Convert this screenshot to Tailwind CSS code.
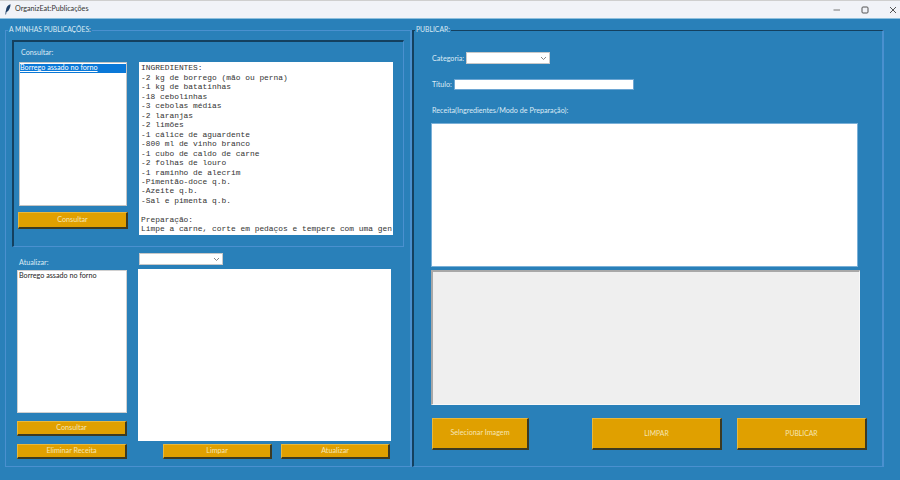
<!DOCTYPE html>
<html lang="pt">
<head>
<meta charset="utf-8">
<title>OrganizEat:Publicações</title>
<script src="https://cdn.jsdelivr.net/npm/@tailwindcss/browser@4"></script>
</head>
<body class="m-0 overflow-hidden">
<div class="w-[900px] h-[480px] flex flex-col bg-[#2980b9] font-['Lato','Open_Sans',sans-serif] text-[7.2px] text-[#dcebf5] overflow-hidden">
  <!-- title bar -->
  <header class="h-[19px] shrink-0 flex items-center bg-[#f1f3f8] border-t border-t-[#cfcfcf] border-b border-b-[#8fc0de] text-[#333] pl-[5px]">
    <svg class="w-[6px] h-[11px]" viewBox="0 0 6 11"><path d="M5.6 0.2C3 0.8 1.2 3 1 6.2L0.6 7.4 0.4 10.6 1 10.6 1.5 8C4 7 5.4 3.6 5.6 0.2Z" fill="#1f3f66"/></svg>
    <span class="ml-[4px] text-[7.2px] leading-none -mt-[1px]">OrganizEat:Publicações</span>
    <div class="ml-auto flex items-center h-full">
      <svg class="w-[8px] h-[8px]" viewBox="0 0 8 8"><path d="M0.5 4H7" stroke="#777" stroke-width="1" fill="none"/></svg>
      <svg class="ml-[20px] w-[8px] h-[8px]" viewBox="0 0 8 8"><rect x="1" y="1" width="6" height="6" rx="1" stroke="#555" stroke-width="1" fill="none"/></svg>
      <svg class="ml-[20px] mr-[3px] w-[8px] h-[8px]" viewBox="0 0 8 8"><path d="M1 1L7 7M7 1L1 7" stroke="#555" stroke-width="1" fill="none"/></svg>
    </div>
  </header>

  <main class="flex pt-[11px] pl-[5px]">
    <!-- A MINHAS PUBLICAÇÕES -->
    <section class="relative w-[407px] h-[437px] border border-r-2 border-[#4a90cf] border-r-[#4a90cf]">
      <span class="absolute left-[2px] -top-[7px] px-[1px] bg-[#2980b9] leading-[11px] text-[6.8px]">A MINHAS PUBLICAÇÕES:</span>

      <div class="ml-[6px] mt-[9px] w-[392px] h-[207px] border-l-2 border-t-2 border-r border-b border-l-[#14405f] border-t-[#14405f] border-r-[#4a90cf] border-b-[#4a90cf]">
        <div class="h-[20px] pl-[7px] pt-[5px] leading-[11px]">Consultar:</div>
        <div class="flex">
          <div class="ml-[4px] w-[110px] flex flex-col items-center">
            <div class="w-[108px] h-[144px] bg-white border border-[#c4c4c4] pt-[1px] text-[#1c1c1c]">
              <div class="h-[9px] bg-[#0a78d7] text-white underline leading-[8px]">Borrego assado no forno</div>
            </div>
            <button class="mt-[6px] w-[110px] h-[17px] bg-[#e0a000] border border-t-[#eab83a] border-l-[#eab83a] border-r-2 border-b-2 border-r-[#3d3a22] border-b-[#3d3a22] text-[#f6e6b5] text-[7.2px]">Consultar</button>
          </div>
          <div class="ml-[11px] w-[254px] h-[173px] bg-white overflow-hidden font-['Liberation_Mono',monospace] text-[7.9px] leading-[9.47px] text-[#333] whitespace-pre pl-[2px] pt-[1.4px]">INGREDIENTES:
-2 kg de borrego (mão ou perna)
-1 kg de batatinhas
-18 cebolinhas
-3 cebolas médias
-2 laranjas
-2 limões
-1 cálice de aguardente
-800 ml de vinho branco
-1 cubo de caldo de carne
-2 folhas de louro
-1 raminho de alecrim
-Pimentão-doce q.b.
-Azeite q.b.
-Sal e pimenta q.b.

Preparação:
Limpe a carne, corte em pedaços e tempere com uma gen</div>
        </div>
      </div>

      <div class="flex ml-[11px] mt-[6px]">
        <div class="w-[110px]">
          <div class="h-[17px] flex items-end pb-[2px] pl-[2px] leading-[11px]">Atualizar:</div>
          <div class="h-[143px] bg-white border border-[#d0d0d0] pl-[1px] text-[#1c1c1c] leading-[9px]">Borrego assado no forno</div>
          <button class="mt-[8px] block w-[110px] h-[15px] bg-[#e0a000] border border-t-[#eab83a] border-l-[#eab83a] border-r-2 border-b-2 border-r-[#3d3a22] border-b-[#3d3a22] text-[#f6e6b5] text-[7.2px]">Consultar</button>
          <button class="mt-[8px] block w-[110px] h-[15px] bg-[#e0a000] border border-t-[#eab83a] border-l-[#eab83a] border-r-2 border-b-2 border-r-[#3d3a22] border-b-[#3d3a22] text-[#f6e6b5] text-[7.2px]">Eliminar Receita</button>
        </div>
        <div class="ml-[11px] w-[253px]">
          <div class="ml-[1px] w-[84px] h-[12px] bg-white border border-[#c8c8c8] flex items-center justify-end pr-[2px]">
            <svg class="w-[7px] h-[5px]" viewBox="0 0 7 5"><path d="M1 1L3.5 3.5L6 1" stroke="#777" stroke-width="0.9" fill="none"/></svg>
          </div>
          <div class="mt-[4px] h-[172px] bg-white"></div>
          <div class="mt-[3px] pl-[25px] flex gap-[9px]">
            <button class="w-[109px] h-[15px] bg-[#e0a000] border border-t-[#eab83a] border-l-[#eab83a] border-r-2 border-b-2 border-r-[#3d3a22] border-b-[#3d3a22] text-[#f6e6b5] text-[7.2px]">Limpar</button>
            <button class="w-[109px] h-[15px] bg-[#e0a000] border border-t-[#eab83a] border-l-[#eab83a] border-r-2 border-b-2 border-r-[#3d3a22] border-b-[#3d3a22] text-[#f6e6b5] text-[7.2px]">Atualizar</button>
          </div>
        </div>
      </div>
    </section>

    <!-- PUBLICAR -->
    <section class="relative w-[472px] h-[437px] border-l-2 border-t border-r-2 border-b border-l-[#14405f] border-t-[#14405f] border-r-[#4a90cf] border-b-[#4a90cf] pl-[18px]">
      <span class="absolute left-[1px] -top-[7px] px-[1px] bg-[#2980b9] leading-[11px] text-[6.8px]">PUBLICAR:</span>

      <div class="mt-[21px] flex items-center h-[12px]">
        <span class="w-[34px] leading-[11px]">Categoria:</span>
        <div class="w-[84px] h-[12px] bg-white border border-[#c8c8c8] flex items-center justify-end pr-[2px]">
          <svg class="w-[7px] h-[5px]" viewBox="0 0 7 5"><path d="M1 1L3.5 3.5L6 1" stroke="#777" stroke-width="0.9" fill="none"/></svg>
        </div>
      </div>
      <div class="mt-[15px] flex items-center h-[11px]">
        <span class="w-[22px] leading-[11px]">Título:</span>
        <div class="w-[180px] h-[11px] bg-white border border-[#6da6d3]"></div>
      </div>
      <div class="mt-[15px] h-[12px] leading-[11px]">Receita(Ingredientes/Modo de Preparação):</div>
      <div class="-ml-[1px] mt-[6px] w-[427px] h-[144px] bg-white border border-[#7ab0d8]"></div>
      <div class="-ml-[1px] mt-[3px] w-[429px] h-[135px] bg-[#efefef] border-l-2 border-t-2 border-r border-b border-l-[#a8a8a8] border-t-[#a8a8a8] border-r-[#f8f8f8] border-b-[#f8f8f8]"></div>
      <div class="mt-[13px] flex">
        <button class="w-[97px] h-[32px] bg-[#e0a000] border border-t-[#eab83a] border-l-[#eab83a] border-r-2 border-b-2 border-r-[#3d3a22] border-b-[#3d3a22] text-[#f6e6b5] text-[7.2px]">Selecionar Imagem</button>
        <button class="ml-[63px] w-[130px] h-[32px] bg-[#e0a000] border border-t-[#eab83a] border-l-[#eab83a] border-r-2 border-b-2 border-r-[#3d3a22] border-b-[#3d3a22] text-[#f6e6b5] text-[6.8px]">LIMPAR</button>
        <button class="ml-[15px] w-[130px] h-[32px] bg-[#e0a000] border border-t-[#eab83a] border-l-[#eab83a] border-r-2 border-b-2 border-r-[#3d3a22] border-b-[#3d3a22] text-[#f6e6b5] text-[6.8px]">PUBLICAR</button>
      </div>
    </section>
  </main>
</div>
</body>
</html>
